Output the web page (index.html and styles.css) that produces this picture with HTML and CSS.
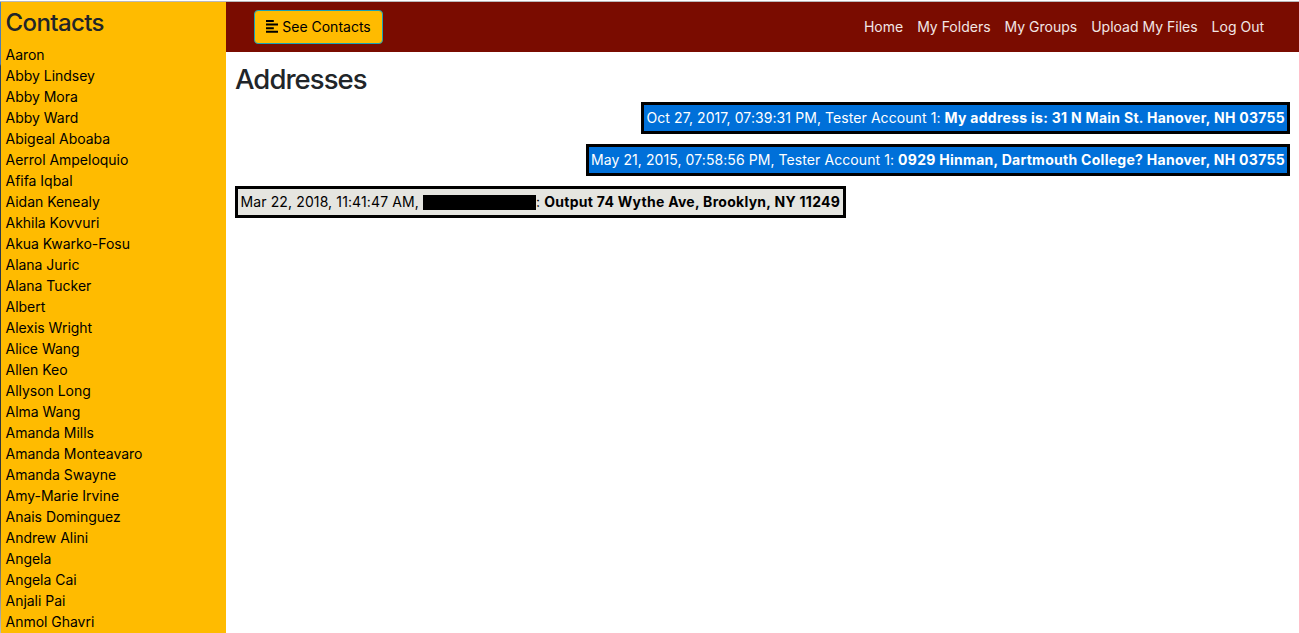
FILE: index.html
```html
<!DOCTYPE html>
<html lang="en">
<head>
<meta charset="utf-8">
<title>Addresses</title>
<link rel="stylesheet" href="styles.css">
</head>
<body>
<div class="window">
  <aside class="sidebar">
    <h3 class="sidebar-title">Contacts</h3>
    <ul class="contacts">
      <li>Aaron</li>
      <li>Abby Lindsey</li>
      <li>Abby Mora</li>
      <li>Abby Ward</li>
      <li>Abigeal Aboaba</li>
      <li>Aerrol Ampeloquio</li>
      <li>Afifa Iqbal</li>
      <li>Aidan Kenealy</li>
      <li>Akhila Kovvuri</li>
      <li>Akua Kwarko-Fosu</li>
      <li>Alana Juric</li>
      <li>Alana Tucker</li>
      <li>Albert</li>
      <li>Alexis Wright</li>
      <li>Alice Wang</li>
      <li>Allen Keo</li>
      <li>Allyson Long</li>
      <li>Alma Wang</li>
      <li>Amanda Mills</li>
      <li>Amanda Monteavaro</li>
      <li>Amanda Swayne</li>
      <li>Amy-Marie Irvine</li>
      <li>Anais Dominguez</li>
      <li>Andrew Alini</li>
      <li>Angela</li>
      <li>Angela Cai</li>
      <li>Anjali Pai</li>
      <li>Anmol Ghavri</li>
    </ul>
  </aside>
  <div class="page">
    <nav class="navbar">
      <button class="toggle" type="button">
        <svg class="toggle-icon" viewBox="0 0 12 13" width="12" height="13"><path d="M0 0h7.8v2H0zM0 3.5h12v2H0zM0 7.2h7.8v2H0zM0 10.8h12v2H0z"/></svg>
        <span class="toggle-label">See Contacts</span>
      </button>
      <div class="links">
        <a>Home</a>
        <a>My Folders</a>
        <a>My Groups</a>
        <a>Upload My Files</a>
        <a>Log Out</a>
      </div>
    </nav>
    <main class="content">
      <h2 class="title">Addresses</h2>
      <div class="messages">
        <p class="message sent first">Oct 27, 2017, 07:39:31 PM, Tester Account 1: <b>My address is: 31 N Main St. Hanover, NH 03755</b></p>
        <p class="message sent second">May 21, 2015, 07:58:56 PM, Tester Account 1: <b>0929 Hinman, Dartmouth College? Hanover, NH 03755</b></p>
        <p class="message received">Mar 22, 2018, 11:41:47 AM, <span class="redacted"></span>: <b>Output 74 Wythe Ave, Brooklyn, NY 11249</b></p>
      </div>
    </main>
  </div>
</div>
</body>
</html>
```

FILE: styles.css
```css
* { box-sizing: border-box; }
body {
  margin: 0;
  height: 633px;
  overflow: hidden;
  background: #fff;
  color: #212529;
  font-family: Inter, "Liberation Sans", sans-serif;
  font-size: 14px;
  line-height: 21px;
}
.window {
  display: flex;
  height: 632px;
  margin-top: 1px;
  border-top: 1px solid #b9b9bb;
}
/* One-pixel desktop edge on the left, then the yellow panel */
.sidebar {
  width: 226px;
  flex: none;
  padding: 6px 5px 0 5.5px;
  background:
    linear-gradient(#4a7fc0 0, #4f7cae 62px, #2c4058 64px, #2b3440 380px, #3a3830 520px, #b9bcc0 631px) left / 1px 100% no-repeat,
    #ffbb00;
  overflow: hidden;
}
.sidebar-title {
  margin: 0 0 7px;
  font-size: 24px;
  font-weight: 500;
  line-height: 29px;
  letter-spacing: -0.6px;
}
.contacts {
  margin: 0;
  padding: 0;
  list-style: none;
  color: #000;
  letter-spacing: -0.02px;
}
.page { flex: 1; }
.navbar {
  display: flex;
  align-items: center;
  justify-content: space-between;
  height: 50px;
  padding: 0 35px 0 28px;
  background: #7a0c00;
}
.toggle {
  display: flex;
  align-items: center;
  justify-content: center;
  gap: 4px;
  width: 129px;
  height: 34px;
  padding: 0;
  border: 1px solid #17a2b8;
  border-radius: 4px;
  background: #ffbb00;
  color: #000;
  font: inherit;
}
.toggle-icon { margin-bottom: 1px; }
.toggle-label { padding-bottom: 2px; }
.links {
  display: flex;
  gap: 14px;
  padding-bottom: 2px;
  color: #f2e6e5;
}
.content { padding: 10px 9px; }
.title {
  margin: 0 0 6px;
  font-size: 27.5px;
  font-weight: 500;
  line-height: 34px;
  letter-spacing: -0.95px;
}
.messages {
  display: flex;
  flex-direction: column;
  gap: 10px;
}
.message {
  height: 32px;
  margin: 0;
  padding: 2px 2.5px;
  border: 3px solid #000;
  white-space: nowrap;
  letter-spacing: 0.08px;
}
.message b { letter-spacing: 0.28px; }
.sent {
  align-self: flex-end;
  background: #0070d9;
  color: #fff;
}
.first { width: 649px; }
.second { width: 704px; padding-left: 2px; }
.received {
  align-self: flex-start;
  width: 611px;
  background: #e5e5e0;
  color: #000;
  letter-spacing: 0.12px;
}
.redacted {
  display: inline-block;
  width: 113px;
  height: 15px;
  background: #000;
  vertical-align: -3px;
}
```
